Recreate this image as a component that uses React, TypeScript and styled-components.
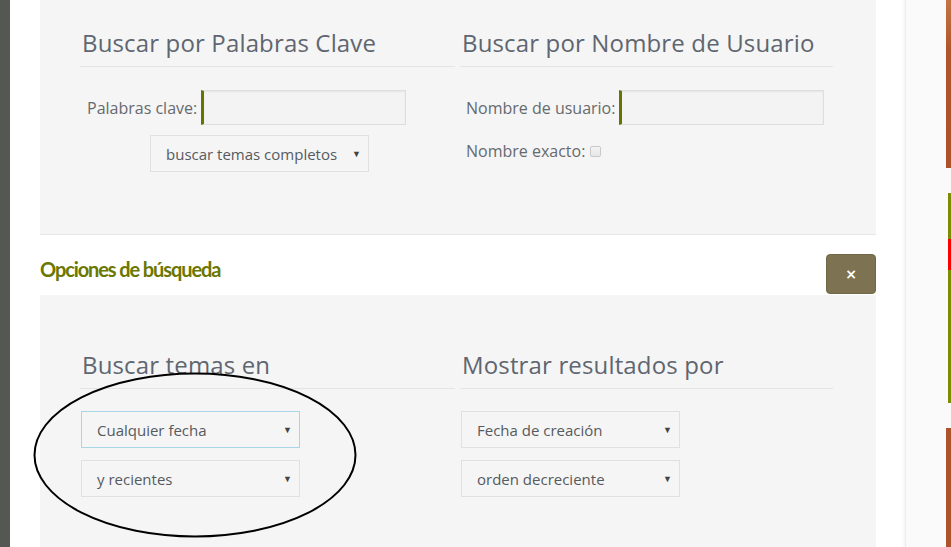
import React from "react";
import styled, { createGlobalStyle } from "styled-components";

const Global = createGlobalStyle`
  html, body { margin: 0; padding: 0; background: #ffffff; overflow: hidden; }
  body { font-family: "Open Sans", "Liberation Sans", sans-serif; }
  * { box-sizing: border-box; }
`;

const Page = styled.div`
  display: flex;
  width: 951px;
  height: 547px;
  overflow: hidden;
`;

const DarkStrip = styled.div`
  width: 10px;
  flex: none;
  background: #555852;
`;

const Main = styled.div`
  flex: none;
  width: 895px;
  padding: 0 29px 0 30px;
  background: #ffffff;
  display: flex;
  flex-direction: column;
`;

const Panel = styled.section<{ $top: number; $height?: number; $border?: boolean }>`
  background: #f5f5f5;
  padding: ${(p) => p.$top}px 0 0 40px;
  ${(p) => (p.$height ? `height: ${p.$height}px;` : "flex: 1;")}
  ${(p) => (p.$border ? "border-bottom: 1px solid #e6e6e6;" : "")}
  display: grid;
  grid-template-columns: 375px 373px;
  column-gap: 5px;
  align-content: start;
`;

const Column = styled.div`
  display: flex;
  flex-direction: column;
`;

const Heading = styled.h3`
  margin: 0;
  padding: 0 0 8px 2px;
  font-family: "Open Sans", "Liberation Sans", sans-serif;
  font-weight: 400;
  font-size: 24px;
  line-height: 30px;
  letter-spacing: 0.15px;
  color: #5f6670;
  border-bottom: 1px solid #e4e4e4;
`;

const FieldRow = styled.div<{ $mt: number; $ml?: number }>`
  display: flex;
  align-items: center;
  margin-top: ${(p) => p.$mt}px;
  margin-left: ${(p) => p.$ml ?? 0}px;
`;

const Label = styled.label<{ $pl: number }>`
  padding-left: ${(p) => p.$pl}px;
  padding-right: 4px;
  font-size: 16px;
  color: #666a6e;
  white-space: nowrap;
`;

const TextInput = styled.input`
  width: 205px;
  height: 35px;
  background: #f3f3f3;
  border: 1px solid #dedede;
  border-left: 3px solid #677400;
  box-shadow: inset 0 1px 2px rgba(0, 0, 0, 0.06);
  outline: none;
`;

const Check = styled.span`
  display: inline-block;
  width: 11px;
  height: 11px;
  margin-left: 1px;
  border: 1px solid #c9c9c9;
  border-radius: 2px;
  background: linear-gradient(#f4f4f4, #e6e6e6);
`;

const SelectBox = styled.div<{ $focus?: boolean }>`
  width: 219px;
  height: 37px;
  display: flex;
  align-items: center;
  justify-content: space-between;
  padding: 0 7px 0 15px;
  background: #f5f5f5;
  border: 1px solid ${(p) => (p.$focus ? "#a9d5e8" : "#e0e0e0")};
  font-size: 15px;
  color: #565a5e;
`;

const Arrow = styled.span`
  font-size: 9px;
  color: #444;
`;

const SelectStack = styled.div`
  margin-top: 22px;
  display: flex;
  flex-direction: column;
  gap: 12px;
  margin-left: 1px;
`;

const Band = styled.div`
  height: 60px;
  display: flex;
  justify-content: space-between;
  align-items: flex-start;
  padding-top: 19px;
`;

const BandTitle = styled.h2`
  margin: 3px 0 0 0;
  font-family: Lato, "Liberation Sans", sans-serif;
  font-weight: 700;
  font-size: 20px;
  line-height: 24px;
  letter-spacing: -1.1px;
  color: #6b7700;
`;

const CloseButton = styled.button`
  width: 50px;
  height: 40px;
  border-radius: 4px;
  border: 1px solid #6f6746;
  background: #7d7352;
  color: #ffffff;
  font-family: "DejaVu Sans", sans-serif;
  font-size: 14px;
  font-weight: 700;
  padding: 0;
  cursor: pointer;
`;

const Lower = styled.div`
  position: relative;
  flex: 1;
  display: flex;
`;

const Ellipse = styled.svg`
  position: absolute;
  left: -8px;
  top: 76px;
  pointer-events: none;
`;

const Sidebar = styled.aside`
  flex: 1;
  background: #fafafa;
  border-left: 1px solid #ececec;
  box-shadow: -2px 0 3px rgba(0, 0, 0, 0.04);
  display: flex;
  flex-direction: column;
  align-items: flex-start;
  padding-left: 40px;
`;

const SideBar = styled.div<{ $h?: number; $color: string; $ml?: number; $mt?: number }>`
  width: ${(p) => 5 - (p.$ml ?? 0)}px;
  margin-left: ${(p) => p.$ml ?? 0}px;
  margin-top: ${(p) => p.$mt ?? 0}px;
  ${(p) => (p.$h ? `height: ${p.$h}px;` : "flex: 1;")}
  background: ${(p) => p.$color};
`;

const Select = ({ text, focus }: { text: string; focus?: boolean }) => (
  <SelectBox $focus={focus}>
    <span>{text}</span>
    <Arrow>▼</Arrow>
  </SelectBox>
);

export default function App() {
  return (
    <Page>
      <Global />
      <DarkStrip />
      <Main>
        <Panel $top={28} $height={235} $border>
          <Column>
            <Heading>Buscar por Palabras Clave</Heading>
            <FieldRow $mt={23}>
              <Label $pl={7}>Palabras clave:</Label>
              <TextInput />
            </FieldRow>
            <FieldRow $mt={10} $ml={70}>
              <Select text="buscar temas completos" />
            </FieldRow>
          </Column>
          <Column>
            <Heading>Buscar por Nombre de Usuario</Heading>
            <FieldRow $mt={23}>
              <Label $pl={6}>Nombre de usuario:</Label>
              <TextInput />
            </FieldRow>
            <FieldRow $mt={15}>
              <Label $pl={6}>Nombre exacto:</Label>
              <Check />
            </FieldRow>
          </Column>
        </Panel>
        <Band>
          <BandTitle>Opciones de búsqueda</BandTitle>
          <CloseButton aria-label="Cerrar">×</CloseButton>
        </Band>
        <Lower>
          <Panel $top={55}>
            <Column>
              <Heading>Buscar temas en</Heading>
              <SelectStack>
                <Select text="Cualquier fecha" focus />
                <Select text="y recientes" />
              </SelectStack>
            </Column>
            <Column>
              <Heading>Mostrar resultados por</Heading>
              <SelectStack>
                <Select text="Fecha de creación" />
                <Select text="orden decreciente" />
              </SelectStack>
            </Column>
          </Panel>
          <Ellipse width="326" height="168" viewBox="0 0 326 168">
            <ellipse cx="163" cy="84" rx="160.5" ry="81.5" fill="none" stroke="#000" strokeWidth="2" />
          </Ellipse>
        </Lower>
      </Main>
      <Sidebar>
        <SideBar $h={168} $color="linear-gradient(#c47443, #b0552b 30%, #ad5128)" />
        <SideBar $h={210} $mt={25} $ml={2} $color="linear-gradient(#7f8b00 0, #7f8b00 46px, #ff0000 46px, #ff0000 77px, #7f8b00 77px)" />
        <SideBar $mt={25} $color="#ad532b" />
      </Sidebar>
    </Page>
  );
}
